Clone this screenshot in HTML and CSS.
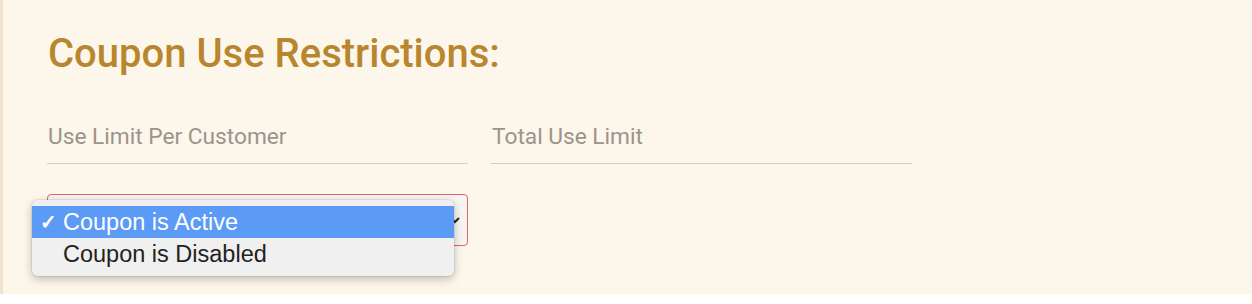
FILE: index.html
```html
<!DOCTYPE html>
<html>
<head>
<meta charset="utf-8">
<link rel="stylesheet" href="styles.css">
</head>
<body>
<div class="panel">
  <h2 class="title">Coupon Use Restrictions:</h2>
  <div class="fields">
    <div class="field"><span class="label">Use Limit Per Customer</span></div>
    <div class="field"><span class="label">Total Use Limit</span></div>
  </div>
  <div class="select-wrap">
    <div class="select">
      <svg class="chev" width="12" height="10" viewBox="0 0 12 10"><path d="M2 3 L6 7 L10 3" fill="none" stroke="#222" stroke-width="2"/></svg>
    </div>
    <ul class="menu">
      <li class="opt active"><span class="tick">✓</span>Coupon is Active</li>
      <li class="opt">Coupon is Disabled</li>
    </ul>
  </div>
</div>
</body>
</html>
```

FILE: styles.css
```css
html, body { margin: 0; padding: 0; background: #ffffff; }
.panel {
  height: 294px;
  box-sizing: border-box;
  background: #fdf6eb;
  border-left: 3px solid #efe3cf;
  padding: 30px 0 0 44px;
  font-family: Roboto, "Liberation Sans", sans-serif;
}
.title {
  margin: 0;
  font-size: 40px;
  line-height: 48px;
  font-weight: 500;
  color: #b8862f;
  padding-left: 1px;
}
.fields {
  display: grid;
  grid-template-columns: 421px 421px;
  column-gap: 23px;
  margin-top: 40px;
}
.field {
  border-bottom: 1px solid #d6cdc1;
  height: 46px;
  box-sizing: border-box;
}
.label {
  display: block;
  font-size: 22.7px;
  line-height: 28px;
  color: #9a948b;
  padding-left: 1px;
  padding-top: 5px;
}
.select-wrap {
  position: relative;
  width: 421px;
  margin-top: 30px;
}
.select {
  height: 52px;
  box-sizing: border-box;
  border: 1px solid #e0646e;
  border-radius: 4px;
  background: #f7f5f2;
  display: flex;
  align-items: center;
  justify-content: flex-end;
  padding-right: 6px;
}
.chev { display: block; }
.menu {
  position: absolute;
  left: -15px;
  top: 6px;
  width: 422px;
  margin: 0;
  padding: 6px 0;
  list-style: none;
  background: #f0f0f0;
  border-radius: 6px;
  box-shadow: 0 3px 10px rgba(0,0,0,0.25), 0 0 0 1px rgba(0,0,0,0.06);
  font-family: "Liberation Sans", Arial, sans-serif;
  font-size: 23.5px;
}
.opt {
  height: 32px;
  line-height: 32px;
  padding-left: 31px;
  color: #222222;
  position: relative;
}
.opt.active {
  background: #5b9af5;
  color: #ffffff;
}
.tick {
  position: absolute;
  left: 8px;
  top: 0;
  font-size: 20px;
  font-weight: bold;
}
```
